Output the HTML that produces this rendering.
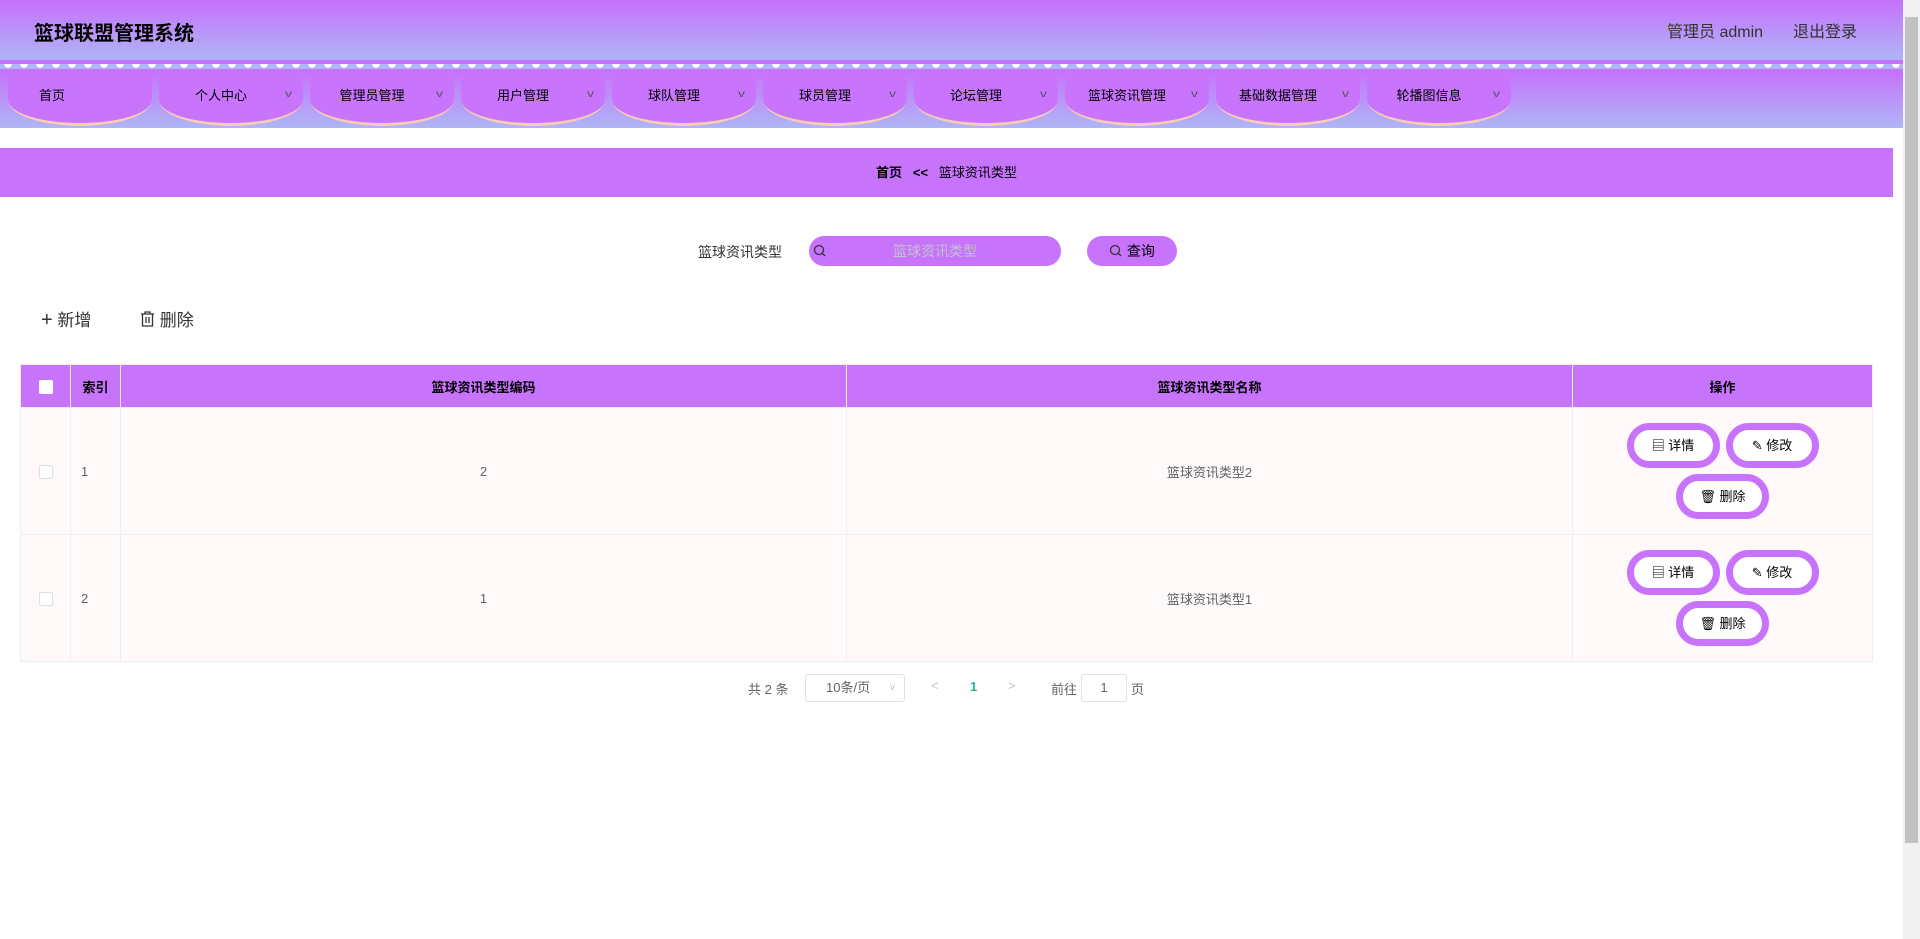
<!DOCTYPE html>
<html><head><meta charset="utf-8"><style>
*{margin:0;padding:0;box-sizing:border-box}
body{width:1920px;height:939px;overflow:hidden;background:#fff;font-family:"Liberation Sans","Noto Sans CJK SC",sans-serif;position:relative;color:#333}
.hdr{position:absolute;left:0;top:0;width:1903px;height:60px;background:linear-gradient(#c670fc,#aeb6f6)}
.title{position:absolute;left:34px;top:17px;font-size:20px;font-weight:bold;color:#000}
.user{position:absolute;top:18px;font-size:16px;color:#333}
.strip{position:absolute;left:0;top:60px;width:1903px;height:4px;background:#c670fc}
.dots{position:absolute;left:0;top:64px;width:1903px;height:5px;background:#aeb6f6 radial-gradient(circle at 8px 0,#fff 3.5px,transparent 4px) 0 0/16px 5px repeat-x}
.nav{position:absolute;left:0;top:69px;width:1903px;height:59px;background:linear-gradient(#c670fc,#aeb6f6)}
.tab{position:absolute;top:0;width:144px;height:57px;background:#c874fc;border-radius:0 0 72px 72px/0 0 26px 26px;border-bottom:3px solid #f7cbb5;font-size:13px;color:#000}
.tab span{position:absolute;top:16px;left:0;right:20px;text-align:center}
.tab i{position:absolute;right:12px;top:20px;font-style:normal;font-size:10px;color:#555;transform:scaleX(1.4)}
.bc{position:absolute;left:0;top:148px;width:1893px;height:49px;background:#c873fb;font-size:13px;color:#000;text-align:center;line-height:49px}
.sb{position:absolute;left:1903px;top:0;width:17px;height:939px;background:#f1f1f1}
.sb div{position:absolute;left:2px;top:17px;width:13px;height:826px;background:#c1c1c1}
.lbl{position:absolute;left:698px;top:242px;font-size:14px;color:#333}
.inp{position:absolute;left:809px;top:236px;width:252px;height:30px;border-radius:15px;background:#c873fb;color:#c0c4cc;font-size:14px;text-align:center;line-height:30px}
.qbtn{position:absolute;left:1087px;top:236px;width:90px;height:30px;border-radius:15px;background:#c873fb;color:#000;font-size:14px;line-height:30px;text-align:center}
.act{position:absolute;top:306px;font-size:17px;color:#333}
table{position:absolute;left:20px;top:364px;width:1853px;border-collapse:collapse;font-size:13px}
th{background:#c873fb;height:43px;border:1px solid #ebeef5;color:#000;font-weight:bold}
td{background:#fffaf9;height:127px;border:1px solid #ebeef5;text-align:center;color:#606266}
.cb{display:inline-block;width:14px;height:14px;border:1px solid #dcdfe6;background:#fff;border-radius:2px;vertical-align:middle}
.btn{display:inline-block;width:93px;height:45px;border:7px solid #c873fb;border-radius:23px;background:#fff;color:#000;font-size:13px;line-height:31px;margin:0 3px}
.pg{position:absolute;top:680px;font-size:13px;color:#606266}
</style></head><body>
<div class="hdr"><div class="title">篮球联盟管理系统</div><div class="user" style="left:1667px">管理员 admin</div><div class="user" style="left:1793px">退出登录</div></div>
<div class="strip"></div><div class="dots"></div>
<div class="nav">
<div class="tab" style="left:8px"><span style="text-align:left;left:31px">首页</span></div>
<div class="tab" style="left:159px"><span>个人中心</span><i>v</i></div>
<div class="tab" style="left:310px"><span>管理员管理</span><i>v</i></div>
<div class="tab" style="left:461px"><span>用户管理</span><i>v</i></div>
<div class="tab" style="left:612px"><span>球队管理</span><i>v</i></div>
<div class="tab" style="left:763px"><span>球员管理</span><i>v</i></div>
<div class="tab" style="left:914px"><span>论坛管理</span><i>v</i></div>
<div class="tab" style="left:1065px"><span>篮球资讯管理</span><i>v</i></div>
<div class="tab" style="left:1216px"><span>基础数据管理</span><i>v</i></div>
<div class="tab" style="left:1367px"><span>轮播图信息</span><i>v</i></div>
</div>
<div class="bc"><b>首页</b> &nbsp; <b>&lt;&lt;</b> &nbsp; 篮球资讯类型</div>
<div class="lbl">篮球资讯类型</div>
<div class="inp"><svg style="position:absolute;left:4px;top:8px" width="14" height="14" viewBox="0 0 14 14"><circle cx="6" cy="6" r="4.5" fill="none" stroke="#333" stroke-width="1.3"/><path d="M9.3 9.3L12 12" stroke="#333" stroke-width="1.3"/></svg>篮球资讯类型</div>
<div class="qbtn"><svg width="14" height="14" viewBox="0 0 14 14" style="vertical-align:-2px"><circle cx="6" cy="6" r="4.5" fill="none" stroke="#333" stroke-width="1.3"/><path d="M9.3 9.3L12 12" stroke="#333" stroke-width="1.3"/></svg> 查询</div>
<div class="act" style="left:41px"><span style="font-size:20px;font-weight:300">+</span> 新增</div>
<div class="act" style="left:140px"><svg width="15" height="16" viewBox="0 0 15 16" style="vertical-align:-1px"><path d="M1 3h13M5 3V1h5v2M2.5 3v12h10V3M6 6v6M9 6v6" fill="none" stroke="#333" stroke-width="1.3"/></svg> 删除</div>
<table>
<tr><th style="width:50px"><span class="cb" style="border:none"></span></th><th style="width:50px">索引</th><th style="width:726px">篮球资讯类型编码</th><th style="width:726px">篮球资讯类型名称</th><th>操作</th></tr>
<tr><td><span class="cb"></span></td><td style="text-align:left;padding-left:10px">1</td><td>2</td><td>篮球资讯类型2</td><td><span class="btn">▤ 详情</span><span class="btn">✎ 修改</span><br><span class="btn" style="margin-top:6px">🗑 删除</span></td></tr>
<tr><td><span class="cb"></span></td><td style="text-align:left;padding-left:10px">2</td><td>1</td><td>篮球资讯类型1</td><td><span class="btn">▤ 详情</span><span class="btn">✎ 修改</span><br><span class="btn" style="margin-top:6px">🗑 删除</span></td></tr>
</table>
<div class="pg" style="left:748px;top:679px">共 2 条</div>
<div class="pg" style="left:805px;top:674px;width:100px;height:28px;border:1px solid #dcdfe6;border-radius:3px;line-height:26px;padding-left:20px">10条/页 <span style="position:absolute;right:9px;color:#c0c4cc;font-size:10px">v</span></div>
<div class="pg" style="left:931px;top:678px;color:#c0c4cc">&lt;</div>
<div class="pg" style="left:970px;top:679px;color:#1fb99a;font-weight:bold">1</div>
<div class="pg" style="left:1008px;top:678px;color:#c0c4cc">&gt;</div>
<div class="pg" style="left:1051px;top:679px">前往</div>
<div class="pg" style="left:1081px;top:674px;width:46px;height:28px;border:1px solid #dcdfe6;border-radius:3px;line-height:26px;text-align:center">1</div>
<div class="pg" style="left:1131px;top:679px">页</div>
<div class="sb"><div></div></div>
</body></html>
